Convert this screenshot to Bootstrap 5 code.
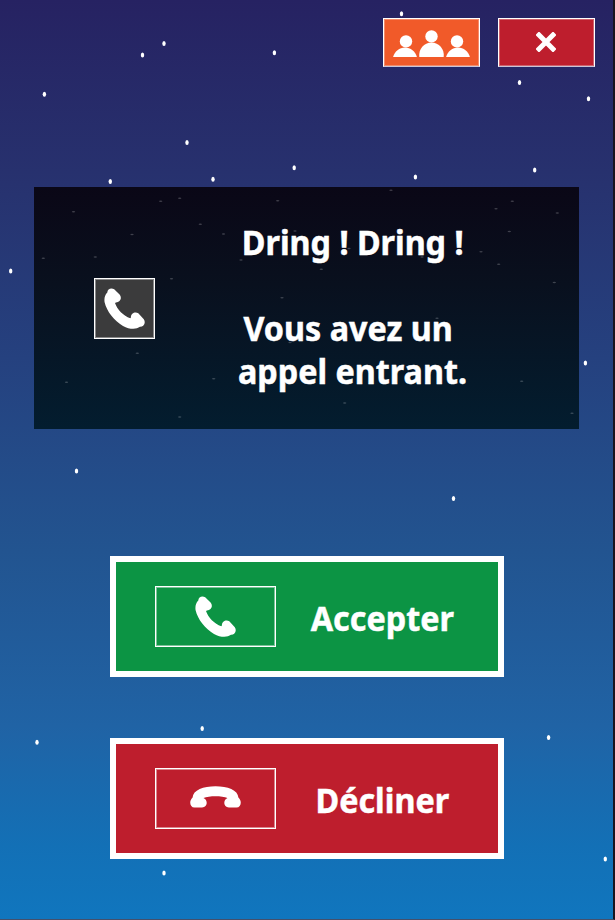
<!DOCTYPE html>
<html lang="fr">
<head>
<meta charset="utf-8">
<meta name="viewport" content="width=device-width, initial-scale=1">
<title>Appel entrant</title>
<link href="https://cdn.jsdelivr.net/npm/bootstrap@5.3.0/dist/css/bootstrap.min.css" rel="stylesheet">
<style>
body{margin:0;background:#1b1420;font-family:"Noto Sans",sans-serif}
.phone-screen{width:615px;height:920px;border-right:2px solid #19141f;border-bottom:1px solid #45506b;background:linear-gradient(#262262 0,#27326f 20%,#25417f 39%,#225490 60%,#2063a5 79%,#1370b6 92%,#1076be 100%)}
.sky{left:0;top:0;pointer-events:none}
.top-actions{padding:18px 18px 0 0;gap:18px}
.tool-btn{width:97px;height:49px;border:1.5px solid #fff;border-radius:0;box-shadow:inset 0 0 0 1px rgba(255,255,255,.3);border-bottom-color:#c9c4d8}
.orange{background:#f15a29}
.crimson{background:#be1e2d}
.green{background:#0c9444}
.notice{width:545px;height:242px;margin:120px 0 0 34px;background:linear-gradient(#0a0716,#09101e 40%,#031d2f);padding-left:60px}
.phone-tile{width:61px;height:61px;background:#3b3b3c;border:1px solid #fff;box-shadow:inset 0 0 0 1px rgba(255,255,255,.4)}
.notice-text{width:260px;margin:-2px 0 0 67.500px;font-size:34px;line-height:43px;font-weight:700;white-space:nowrap;-webkit-text-stroke:.5px #fff}
.squeeze{display:inline-block;transform:scaleX(.95)}
.vous{margin-right:8px}
.answers{margin:126.500px 0 0 109.500px;gap:60.500px;width:394px}
.answer{height:121.500px;border:6px solid #fff;border-radius:0;padding:0 0 0 39.500px;color:#fff;font-size:34px;line-height:43px;font-weight:700;-webkit-text-stroke:.5px #fff}
.answer-icon{width:121px;height:61px;border:1px solid #fff;box-shadow:inset 0 0 0 1px rgba(255,255,255,.45)}
.answer-label{width:213px;padding-top:4px}
.cross-icon{margin:0 1px 2px 0}
.hangup-icon{margin-bottom:3px}
</style>
</head>
<body>
<main class="phone-screen position-relative overflow-hidden">
<svg class="sky position-absolute" width="613" height="919" aria-hidden="true">
<defs><ellipse id="star" rx="1.7" ry="2.5" fill="#fff"/><ellipse id="dim" rx="1.7" ry=".8" fill="#fff" opacity=".22"/></defs>
<use href="#star" x="401.5" y="13.7"/><use href="#star" x="164" y="43.6"/><use href="#star" x="142.5" y="55.1"/><use href="#star" x="274.4" y="52.8"/><use href="#star" x="44.4" y="94.2"/><use href="#star" x="519.5" y="82.6"/><use href="#star" x="588.5" y="98.7"/><use href="#star" x="187" y="142.4"/><use href="#star" x="294.2" y="167.7"/><use href="#star" x="213" y="179.2"/><use href="#star" x="110.3" y="181.5"/><use href="#star" x="415.4" y="177"/><use href="#star" x="534.7" y="170"/><use href="#star" x="10.7" y="271"/><use href="#star" x="585.4" y="363"/><use href="#star" x="76.5" y="471"/><use href="#star" x="453.5" y="498.4"/><use href="#star" x="202.2" y="728.4"/><use href="#star" x="37" y="742.2"/><use href="#star" x="548.6" y="737.5"/><use href="#star" x="605.3" y="859"/><use href="#star" x="164" y="873"/>
</svg>
<div class="top-actions d-flex justify-content-end">
<button class="tool-btn orange btn p-0 d-flex align-items-center justify-content-center" aria-label="Contacts">
<svg width="78" height="30" viewBox="0 0 78 30" fill="#fff"><g transform="translate(-.5 2)"><circle cx="13.5" cy="11.4" r="6.2"/><path d="M.6 27C2 21.2 7 17.4 12.5 17.4S23 21.2 24.4 27z"/><circle cx="39" cy="6.4" r="6.2"/><path d="M26.8 27c-1-8 4.800-14.500 12.200-14.500S52.200 19 51.200 27z"/><circle cx="64.500" cy="11.400" r="6.200"/><path d="M53.600 27C55 21.200 60 17.400 65.500 17.400S76 21.200 77.400 27z"/></g></svg>
</button>
<button class="tool-btn crimson btn p-0 d-flex align-items-center justify-content-center" aria-label="Fermer">
<svg class="cross-icon" width="20" height="20" viewBox="0 0 20 20" stroke="#fff" stroke-width="5"><path d="M1.200 1.200 18.800 18.800M18.800 1.200 1.200 18.800"/></svg>
</button>
</div>
<section class="notice position-relative d-flex align-items-center text-white">
<svg class="sky position-absolute" width="545" height="242" viewBox="34 187 545 242" aria-hidden="true">
<use href="#dim" x="73.500" y="211.700"/><use href="#dim" x="160.700" y="201.300"/><use href="#dim" x="179.700" y="198.300"/><use href="#dim" x="200.300" y="224.300"/><use href="#dim" x="132" y="234.500"/><use href="#dim" x="223.500" y="234"/><use href="#dim" x="43.300" y="258.300"/><use href="#dim" x="95.300" y="257"/><use href="#dim" x="171.500" y="278.700"/><use href="#dim" x="137.300" y="353.300"/><use href="#dim" x="66.500" y="382.300"/><use href="#dim" x="213.700" y="378.700"/><use href="#dim" x="179.700" y="417"/><use href="#dim" x="277.700" y="200.700"/><use href="#dim" x="391" y="190.300"/><use href="#dim" x="496" y="208.700"/><use href="#dim" x="512.300" y="201.300"/><use href="#dim" x="557.300" y="213"/><use href="#dim" x="509.300" y="231.500"/><use href="#dim" x="481" y="251.700"/><use href="#dim" x="498.700" y="264.300"/><use href="#dim" x="554.300" y="282.500"/><use href="#dim" x="282" y="297.700"/><use href="#dim" x="321.300" y="269.200"/><use href="#dim" x="241" y="260"/><use href="#dim" x="295" y="231"/><use href="#dim" x="437" y="318.200"/><use href="#dim" x="521.700" y="381.200"/><use href="#dim" x="344.700" y="403"/><use href="#dim" x="572" y="413.200"/><use href="#dim" x="290" y="342.500"/><use href="#dim" x="422" y="257"/><use href="#dim" x="349" y="248.500"/>
</svg>
<div class="phone-tile d-flex align-items-center justify-content-center">
<svg width="41" height="41" viewBox="0 0 41 41" fill="#fff"><path id="handset" d="M3.300 4.500C3.500 .9 7-.4 10.200 1.200L15.800 6.800C18.300 10.200 16 14.500 12 14.500L11 15C13 21.300 19.500 28 26.300 30.200L26.900 29.500C26.600 25.600 31 23.200 34.300 25.300L39.800 31.200C42.200 35 39.700 38.900 36 38.800C32 41.800 25.200 41.300 19 37.900C10 32.800 2.800 23.500 .6 14.300C0 10.500 .8 7 3.300 4.500Z"/></svg>
</div>
<div class="notice-text text-center"><span class="squeeze">Dring ! Dring !</span><br><br><span class="squeeze vous">Vous avez un</span><br><span class="squeeze">appel entrant.</span></div>
</section>
<div class="answers d-flex flex-column">
<button class="answer green btn d-flex align-items-center">
<span class="answer-icon d-flex align-items-center justify-content-center"><svg width="41" height="41" viewBox="0 0 41 41" fill="#fff"><use href="#handset"/></svg></span>
<span class="answer-label text-center"><span class="squeeze">Accepter</span></span>
</button>
<button class="answer crimson btn d-flex align-items-center">
<span class="answer-icon d-flex align-items-center justify-content-center"><svg class="hangup-icon" width="51" height="22" viewBox="0 0 51 22" fill="#fff"><path d="M2.600 11.500C3 4 13.500 .2 25.500 .2S48 4 48.400 11.500C52.200 14.800 51.300 21.500 46.500 21.500H39C34 21.500 33 15.600 36 12.900L37.500 12C32 9.600 19 9.600 13.500 12L15 12.900C18 15.600 17 21.500 12 21.500H4.500C-.3 21.500-1.200 14.800 2.600 11.500Z"/></svg></span>
<span class="answer-label text-center"><span class="squeeze">Décliner</span></span>
</button>
</div>
</main>
<script src="https://cdn.jsdelivr.net/npm/bootstrap@5.3.0/dist/js/bootstrap.bundle.min.js"></script>
</body>
</html>
